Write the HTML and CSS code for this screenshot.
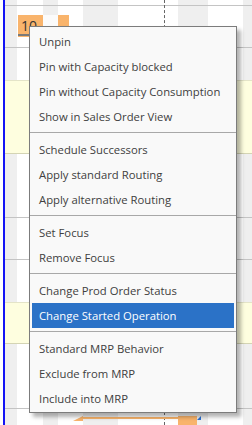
FILE: index.html
```html
<!DOCTYPE html>
<html lang="en">
<head>
    <meta charset="UTF-8">
    <meta name="viewport" content="width=device-width, initial-scale=1.0">
    <title>Planning Board</title>
    <link rel="stylesheet" href="styles.css">
</head>
<body>
    <div class="board">
        <!-- column stripes -->
        <div class="cols">
            <div class="col"></div>
            <div class="col today"></div>
            <div class="col off"></div>
            <div class="col"></div>
            <div class="col off"></div>
            <div class="col"></div>
            <div class="col off"></div>
            <div class="col"></div>
            <div class="col off"></div>
            <div class="col"></div>
            <div class="col off"></div>
        </div>

        <!-- resource rows -->
        <div class="rows">
            <div class="row"></div>
            <div class="row"></div>
            <div class="row plain"></div>
            <div class="row group"></div>
            <div class="row"></div>
            <div class="row"></div>
            <div class="row plain"></div>
            <div class="row group"></div>
            <div class="row"></div>
            <div class="row plain"></div>
        </div>

        <div class="now-line"></div>

        <div class="task task-top">
            <span class="task-num">10</span>
            <span class="task-gap"></span>
            <span class="task-progress"></span>
        </div>

        <div class="task-bottom">
            <span class="tb-start"></span>
            <span class="tb-line"></span>
            <span class="tb-end"></span>
            <span class="tb-corner"></span>
        </div>

        <ul class="context-menu">
            <li>Unpin</li>
            <li>Pin with Capacity blocked</li>
            <li>Pin without Capacity Consumption</li>
            <li>Show in Sales Order View</li>
            <li class="sep"></li>
            <li>Schedule Successors</li>
            <li>Apply standard Routing</li>
            <li>Apply alternative Routing</li>
            <li class="sep"></li>
            <li>Set Focus</li>
            <li>Remove Focus</li>
            <li class="sep"></li>
            <li>Change Prod Order Status</li>
            <li class="active">Change Started Operation</li>
            <li class="sep"></li>
            <li>Standard MRP Behavior</li>
            <li>Exclude from MRP</li>
            <li>Include into MRP</li>
        </ul>
    </div>
</body>
</html>
```

FILE: styles.css
```css
* {
    margin: 0;
    padding: 0;
    box-sizing: border-box;
}

body {
    font-family: 'Open Sans', 'Noto Sans', sans-serif;
    background: #fff;
    color: #333;
    overflow: hidden;
}

.board {
    position: relative;
    width: 252px;
    height: 425px;
    overflow: hidden;
    background: #fff;
}

.cols {
    position: absolute;
    inset: 0;
    display: grid;
    grid-template-columns: 3px 2px 12px 26px 15px 25px 35px 60px 30px 35px 9px;
}

.col {
    background: #fff;
}

.col.off {
    background: #efefef;
}

.col.today {
    background: #1414f5;
    z-index: 2;
}

.rows {
    position: absolute;
    inset: 0 0 0 5px;
    display: grid;
    grid-template-rows: 6px 42px 32px 74px 64px 42px 42px 42px 65px 16px;
}

.row {
    border-bottom: 1px solid #c4c4c4;
}

.row.plain {
    border-bottom: none;
}

.row.group {
    background: #fefedf;
    border-top: 1px solid #e4e4c8;
    border-bottom: 1px solid #d4d4b4;
}

.now-line {
    position: absolute;
    left: 164px;
    top: 0;
    bottom: 0;
    border-left: 1px dashed #666;
}

.task {
    position: absolute;
    display: flex;
}

.task-top {
    left: 18px;
    top: 15px;
    width: 51px;
    height: 22px;
    background: #f9b46c;
}

.task-num {
    font-size: 14px;
    line-height: 14px;
    color: #333;
    padding: 4px 0 0 3px;
    width: 25px;
}

.task-gap {
    width: 15px;
    height: 11px;
    background: #fbfbfb;
}

.task-progress {
    position: absolute;
    left: 0;
    bottom: 1px;
    width: 24px;
    height: 2px;
    background: #7a7a7a;
}

.task-bottom {
    position: absolute;
    left: 73px;
    top: 416px;
    width: 128px;
    height: 9px;
    display: flex;
    align-items: flex-start;
}

.tb-start {
    width: 0;
    height: 0;
    border-bottom: 5px solid #f9b46c;
    border-left: 10px solid transparent;
}

.tb-line {
    width: 95px;
    height: 2px;
    margin-top: 1px;
    background: #f9b46c;
}

.tb-end {
    width: 19px;
    height: 9px;
    background: #f9b46c;
}

.tb-corner {
    width: 0;
    height: 0;
    border-bottom: 4px solid #2a6fd0;
    border-left: 4px solid transparent;
}

.context-menu {
    position: absolute;
    left: 29px;
    top: 26px;
    width: 208px;
    height: 387px;
    list-style: none;
    background: #f9f9f9;
    border: 1px solid #7c7c7c;
    box-shadow: 4px 4px 4px rgba(0, 0, 0, 0.3);
    padding: 2px 2px 0;
    font-size: 11.3px;
    z-index: 5;
}

.context-menu li {
    height: 25px;
    line-height: 25px;
    padding-left: 7px;
    color: #404040;
    white-space: nowrap;
}

.context-menu li.sep {
    height: 8px;
    margin: 0 -2px;
    position: relative;
}

.context-menu li.sep::after {
    content: '';
    position: absolute;
    left: 0;
    right: 0;
    top: 3px;
    border-top: 1px solid #a8a8a8;
}

.context-menu li.active {
    background: #2b72c7;
    color: #fff;
}
```
